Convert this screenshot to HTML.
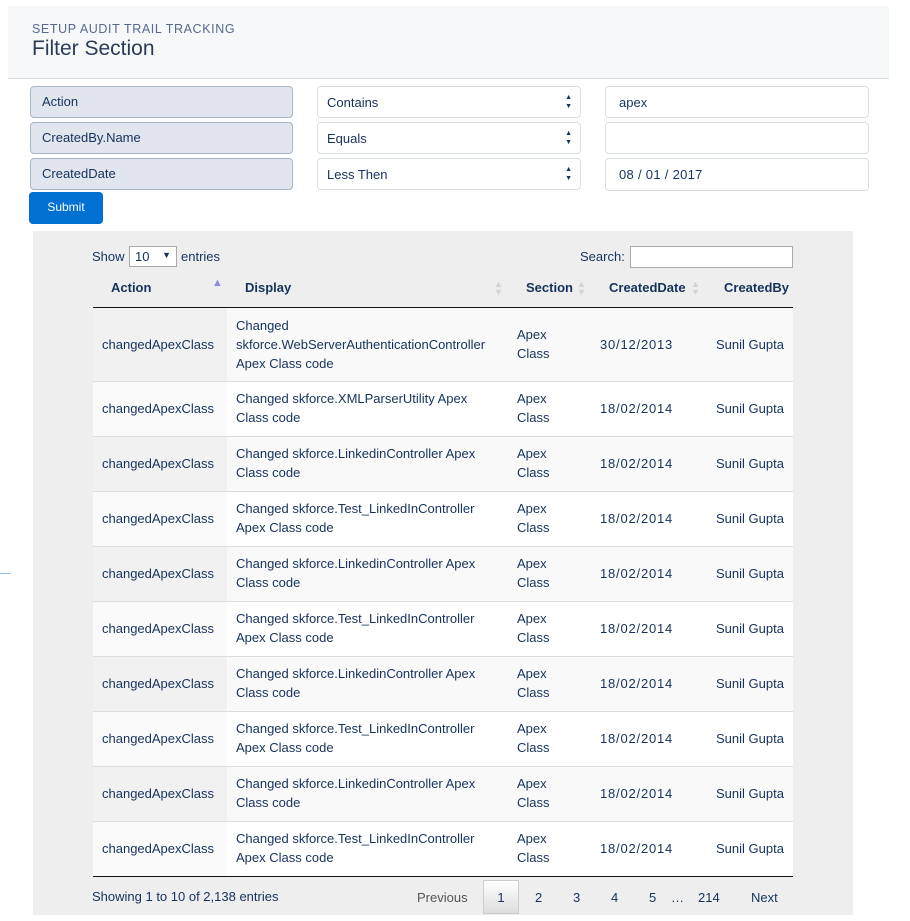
<!DOCTYPE html>
<html><head><meta charset="utf-8"><style>
*{box-sizing:border-box;margin:0;padding:0}
body{width:910px;height:921px;background:#fff;font-family:"Liberation Sans",sans-serif;color:#16325c;font-size:13px;position:relative;overflow:hidden}
.a{position:absolute}
.hdr{left:8px;top:6px;width:881px;height:73px;background:#f7f8fa;border-bottom:1px solid #d8dde6}
.lbl{left:30px;width:263px;height:32px;background:#e0e5ee;border:1px solid #a8b7c7;border-radius:4px;padding:7px 11px;font-size:13px}
.sel{left:317px;width:264px;height:32px;border:1px solid #d8dde6;border-radius:4px;padding:8px 9px;background:#fff}
.sel:after{content:"▲\A▼";white-space:pre;position:absolute;right:8px;top:6px;font-size:7px;line-height:9px;color:#16325c}
.inp{left:605px;width:264px;height:32px;border:1px solid #d8dde6;border-radius:4px;padding:8px 13px;background:#fff}
.btn{left:29px;top:192px;width:74px;height:32px;background:#0070d2;border-radius:4px;color:#fff;text-align:center;line-height:31px;font-size:12px}
.wrap{left:33px;top:231px;width:820px;height:684px;background:#eeeeee}
.row{left:93px;width:700px;display:flex;border-top:1px solid #ddd}
.c{display:flex;align-items:center;padding-left:9px;line-height:19px;padding-bottom:2px}
.c1{width:134px}.c2{width:281px}.c3{width:82px}.c4{width:116px;padding-left:10px;letter-spacing:0.8px}.c5{width:87px;padding-left:10px}
.th{font-weight:bold;font-size:13px}
.sa{font-size:9px;line-height:8px;color:#d4d4d4}
</style></head><body>
<div class="a" style="left:0;top:573px;width:11px;height:1px;background:#9cc2f0"></div>
<div class="a hdr"></div>
<div class="a" style="left:32px;top:22px;font-size:12.5px;letter-spacing:0.6px;color:#54698d">SETUP AUDIT TRAIL TRACKING</div>
<div class="a" style="left:32px;top:37px;font-size:21px;color:#2b3a57">Filter Section</div>

<div class="a lbl" style="top:86px">Action</div>
<div class="a lbl" style="top:122px">CreatedBy.Name</div>
<div class="a lbl" style="top:158px">CreatedDate</div>
<div class="a sel" style="top:86px">Contains</div>
<div class="a sel" style="top:122px">Equals</div>
<div class="a sel" style="top:158px">Less Then</div>
<div class="a inp" style="top:86px">apex</div>
<div class="a inp" style="top:122px"></div>
<div class="a inp" style="top:158px;height:33px;letter-spacing:0.3px">08 / 01 / 2017</div>
<div class="a btn">Submit</div>

<div class="a wrap"></div>
<div class="a" style="left:92px;top:249px">Show</div>
<div class="a" style="left:129px;top:246px;width:48px;height:21px;border:1px solid #aaa;background:#fff;padding:2px 5px">10<span style="position:absolute;right:5px;top:3px;font-size:9px">▼</span></div>
<div class="a" style="left:181px;top:249px">entries</div>
<div class="a" style="left:580px;top:249px">Search:</div>
<div class="a" style="left:630px;top:246px;width:163px;height:22px;border:1px solid #aaa;background:#fff"></div>

<div class="a" style="left:93px;top:270px;width:700px;height:38px;border-bottom:1px solid #111"></div>
<div class="a th" style="left:111px;top:280px">Action</div>
<div class="a" style="left:212px;top:277px;font-size:11px;color:#8a8ae0">▲</div>
<div class="a th" style="left:245px;top:280px">Display</div>
<div class="a sa" style="left:494px;top:280px">▲<br>▼</div>
<div class="a th" style="left:526px;top:280px">Section</div>
<div class="a sa" style="left:577px;top:280px">▲<br>▼</div>
<div class="a th" style="left:609px;top:280px">CreatedDate</div>
<div class="a sa" style="left:691px;top:280px">▲<br>▼</div>
<div class="a th" style="left:724px;top:280px">CreatedBy</div>

<div class="a row" style="top:308px;height:74px;background:#f9f9f9;border-top:none"><div class="c c1" style="background:#f1f1f1">changedApexClass</div><div class="c c2">Changed<br>skforce.WebServerAuthenticationController<br>Apex Class code</div><div class="c c3">Apex<br>Class</div><div class="c c4">30/12/2013</div><div class="c c5">Sunil Gupta</div></div>
<div class="a row" style="top:381px;height:55px;background:#fff"><div class="c c1" style="background:#fafafa">changedApexClass</div><div class="c c2">Changed skforce.XMLParserUtility Apex<br>Class code</div><div class="c c3">Apex<br>Class</div><div class="c c4">18/02/2014</div><div class="c c5">Sunil Gupta</div></div>
<div class="a row" style="top:436px;height:55px;background:#f9f9f9"><div class="c c1" style="background:#f1f1f1">changedApexClass</div><div class="c c2">Changed skforce.LinkedinController Apex<br>Class code</div><div class="c c3">Apex<br>Class</div><div class="c c4">18/02/2014</div><div class="c c5">Sunil Gupta</div></div>
<div class="a row" style="top:491px;height:55px;background:#fff"><div class="c c1" style="background:#fafafa">changedApexClass</div><div class="c c2">Changed skforce.Test_LinkedInController<br>Apex Class code</div><div class="c c3">Apex<br>Class</div><div class="c c4">18/02/2014</div><div class="c c5">Sunil Gupta</div></div>
<div class="a row" style="top:546px;height:55px;background:#f9f9f9"><div class="c c1" style="background:#f1f1f1">changedApexClass</div><div class="c c2">Changed skforce.LinkedinController Apex<br>Class code</div><div class="c c3">Apex<br>Class</div><div class="c c4">18/02/2014</div><div class="c c5">Sunil Gupta</div></div>
<div class="a row" style="top:601px;height:55px;background:#fff"><div class="c c1" style="background:#fafafa">changedApexClass</div><div class="c c2">Changed skforce.Test_LinkedInController<br>Apex Class code</div><div class="c c3">Apex<br>Class</div><div class="c c4">18/02/2014</div><div class="c c5">Sunil Gupta</div></div>
<div class="a row" style="top:656px;height:55px;background:#f9f9f9"><div class="c c1" style="background:#f1f1f1">changedApexClass</div><div class="c c2">Changed skforce.LinkedinController Apex<br>Class code</div><div class="c c3">Apex<br>Class</div><div class="c c4">18/02/2014</div><div class="c c5">Sunil Gupta</div></div>
<div class="a row" style="top:711px;height:55px;background:#fff"><div class="c c1" style="background:#fafafa">changedApexClass</div><div class="c c2">Changed skforce.Test_LinkedInController<br>Apex Class code</div><div class="c c3">Apex<br>Class</div><div class="c c4">18/02/2014</div><div class="c c5">Sunil Gupta</div></div>
<div class="a row" style="top:766px;height:55px;background:#f9f9f9"><div class="c c1" style="background:#f1f1f1">changedApexClass</div><div class="c c2">Changed skforce.LinkedinController Apex<br>Class code</div><div class="c c3">Apex<br>Class</div><div class="c c4">18/02/2014</div><div class="c c5">Sunil Gupta</div></div>
<div class="a row" style="top:821px;height:56px;background:#fff;border-bottom:1px solid #111"><div class="c c1" style="background:#fafafa">changedApexClass</div><div class="c c2">Changed skforce.Test_LinkedInController<br>Apex Class code</div><div class="c c3">Apex<br>Class</div><div class="c c4">18/02/2014</div><div class="c c5">Sunil Gupta</div></div>

<div class="a" style="left:92px;top:889px">Showing 1 to 10 of 2,138 entries</div>
<div class="a" style="left:417px;top:890px;color:#555">Previous</div>
<div class="a" style="left:483px;top:880px;width:36px;height:34px;border:1px solid #ccc;background:linear-gradient(#fff,#ddd);text-align:center;line-height:33px">1</div>
<div class="a" style="left:535px;top:890px">2</div>
<div class="a" style="left:573px;top:890px">3</div>
<div class="a" style="left:611px;top:890px">4</div>
<div class="a" style="left:649px;top:890px">5</div>
<div class="a" style="left:671px;top:890px">…</div>
<div class="a" style="left:698px;top:890px">214</div>
<div class="a" style="left:751px;top:890px">Next</div>
</body></html>
